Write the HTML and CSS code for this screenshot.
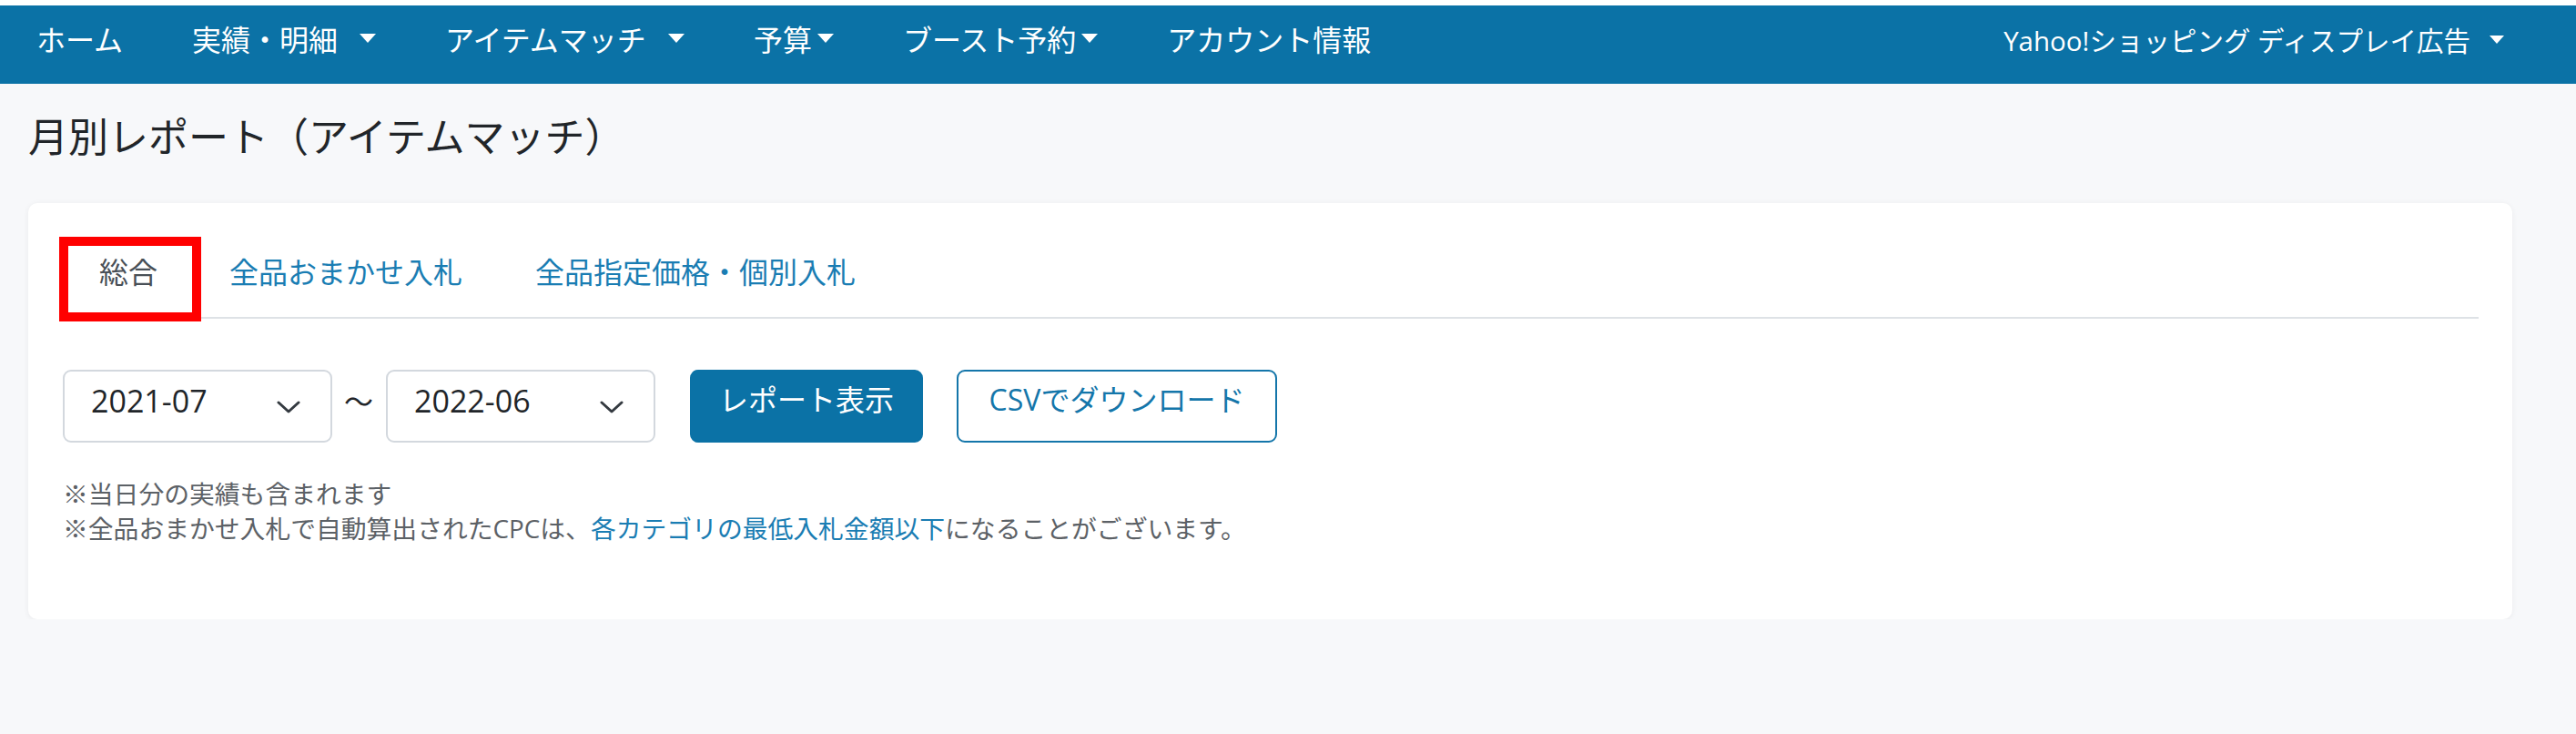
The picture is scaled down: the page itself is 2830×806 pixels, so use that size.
FILE: index.html
```html
<!DOCTYPE html>
<html lang="ja">
<head>
<meta charset="utf-8">
<title>月別レポート（アイテムマッチ）</title>
<link rel="stylesheet" href="styles.css">
</head>
<body>
<header class="header">
  <nav class="navbar">
    <ul class="nav-list">
      <li><a class="nav-link" href="#">ホーム</a></li>
      <li><a class="nav-link" href="#">実績・明細<span class="caret caret-spaced"></span></a></li>
      <li><a class="nav-link" href="#">アイテムマッチ<span class="caret caret-spaced"></span></a></li>
      <li><a class="nav-link" href="#">予算<span class="caret caret-tight"></span></a></li>
      <li><a class="nav-link" href="#">ブースト予約<span class="caret caret-tight"></span></a></li>
      <li><a class="nav-link" href="#">アカウント情報</a></li>
    </ul>
    <ul class="nav-list nav-right">
      <li><a class="nav-link nav-account" href="#">Yahoo!ショッピング ディスプレイ広告<span class="caret caret-account"></span></a></li>
    </ul>
  </nav>
</header>

<main class="main">
  <h1 class="page-title">月別レポート（アイテムマッチ）</h1>

  <section class="card">
    <ul class="tabs">
      <li class="tab tab-active"><a class="tab-link" href="#">総合</a><span class="highlight-box"></span></li>
      <li class="tab"><a class="tab-link" href="#">全品おまかせ入札</a></li>
      <li class="tab"><a class="tab-link" href="#">全品指定価格・個別入札</a></li>
    </ul>

    <div class="controls">
      <div class="select">
        <span class="select-value">2021-07</span>
        <svg class="chevron" width="26" height="14" viewBox="0 0 26 14" aria-hidden="true"><polyline points="2,2 13,12 24,2" fill="none" stroke="#343a40" stroke-width="3" stroke-linecap="round" stroke-linejoin="round"/></svg>
      </div>
      <span class="range-sep">〜</span>
      <div class="select">
        <span class="select-value">2022-06</span>
        <svg class="chevron" width="26" height="14" viewBox="0 0 26 14" aria-hidden="true"><polyline points="2,2 13,12 24,2" fill="none" stroke="#343a40" stroke-width="3" stroke-linecap="round" stroke-linejoin="round"/></svg>
      </div>
      <button class="btn btn-primary" type="button">レポート表示</button>
      <button class="btn btn-outline" type="button">CSVでダウンロード</button>
    </div>

    <div class="notes">
      <p class="note">※当日分の実績も含まれます</p>
      <p class="note">※全品おまかせ入札で自動算出されたCPCは、<a class="note-link" href="#">各カテゴリの最低入札金額以下</a>になることがございます。</p>
    </div>
  </section>
</main>
</body>
</html>
```

FILE: styles.css
```css
* {
  box-sizing: border-box;
}

html, body {
  margin: 0;
  padding: 0;
}

body {
  background: #f7f8fa;
  font-family: "Open Sans", "Noto Sans CJK JP", sans-serif;
  color: #212529;
  font-size: 32px;
  line-height: 1.5;
}

a {
  text-decoration: none;
}

/* ---------- header ---------- */
.header {
  border-top: 6px solid #ffffff;
}

.navbar {
  height: 86px;
  background: #0b72a6;
  display: flex;
  justify-content: space-between;
  align-items: flex-start;
  padding: 14px 41px 0 2px;
}

.nav-list {
  list-style: none;
  margin: 0;
  padding: 0;
  display: flex;
}

.nav-link {
  display: inline-flex;
  align-items: center;
  color: #ffffff;
  font-size: 32px;
  line-height: 48px;
  padding: 0 38px;
}

.nav-account {
  font-size: 29.5px;
}

.caret {
  display: inline-block;
  width: 0;
  height: 0;
  border-top: 10px solid #ffffff;
  border-left: 9px solid transparent;
  border-right: 9px solid transparent;
  margin-top: -4px;
}

.caret-spaced {
  margin-left: 24px;
}

.caret-tight {
  margin-left: 6px;
}

.caret-account {
  margin-left: 21px;
  border-top-width: 9px;
  border-left-width: 8px;
  border-right-width: 8px;
}

/* ---------- main ---------- */
.main {
  padding: 0 70px 0 31px;
}

.page-title {
  margin: 32px 0 46px;
  font-size: 44px;
  line-height: 53px;
  font-weight: 400;
  color: #212529;
}

.card {
  background: #ffffff;
  border-radius: 10px;
  box-shadow: 0 1px 6px rgba(0, 0, 0, 0.06);
  padding: 34px 37px 81px 38px;
}

/* ---------- tabs ---------- */
.tabs {
  list-style: none;
  margin: 0;
  padding: 0;
  display: flex;
  border-bottom: 2px solid #dee2e6;
}

.tab {
  position: relative;
}

.tab-link {
  display: block;
  padding: 18px 40px 25px;
  font-size: 32px;
  line-height: 48px;
  color: #1a7db3;
}

.tab-active .tab-link {
  color: #495057;
  padding-right: 39px;
}

.highlight-box {
  position: absolute;
  left: -4px;
  top: 3px;
  width: 156px;
  height: 93px;
  border: 10px solid #ff0000;
}

/* ---------- controls ---------- */
.controls {
  display: flex;
  align-items: center;
  margin-top: 56px;
}

.select {
  width: 296px;
  height: 80px;
  border: 2px solid #d3d8de;
  border-radius: 9px;
  background: #ffffff;
  display: flex;
  align-items: center;
  justify-content: space-between;
  padding: 0 33px 12px 29px;
}

.select-value {
  font-size: 34px;
  line-height: 51px;
  color: #212529;
}

.chevron {
  display: block;
  margin-top: 14px;
}

.range-sep {
  margin: 0 14px 0 13px;
  font-size: 32px;
  line-height: 48px;
  color: #212529;
  padding-bottom: 10px;
}

.btn {
  height: 80px;
  border-radius: 9px;
  font-family: inherit;
  font-size: 32px;
  line-height: 48px;
  padding: 0 30px 14px;
  display: inline-flex;
  align-items: center;
  cursor: pointer;
}

.btn-primary {
  margin-left: 38px;
  width: 256px;
  justify-content: center;
  background: #0b72a6;
  border: 2px solid #0b72a6;
  color: #ffffff;
}

.btn-outline {
  margin-left: 37px;
  width: 352px;
  justify-content: center;
  background: #ffffff;
  border: 2px solid #1476aa;
  color: #1476aa;
}

/* ---------- notes ---------- */
.notes {
  margin-top: 37px;
}

.note {
  margin: 0;
  font-size: 27.8px;
  line-height: 38px;
  color: #5c6166;
}

.note-link {
  color: #1a7db3;
}
```
